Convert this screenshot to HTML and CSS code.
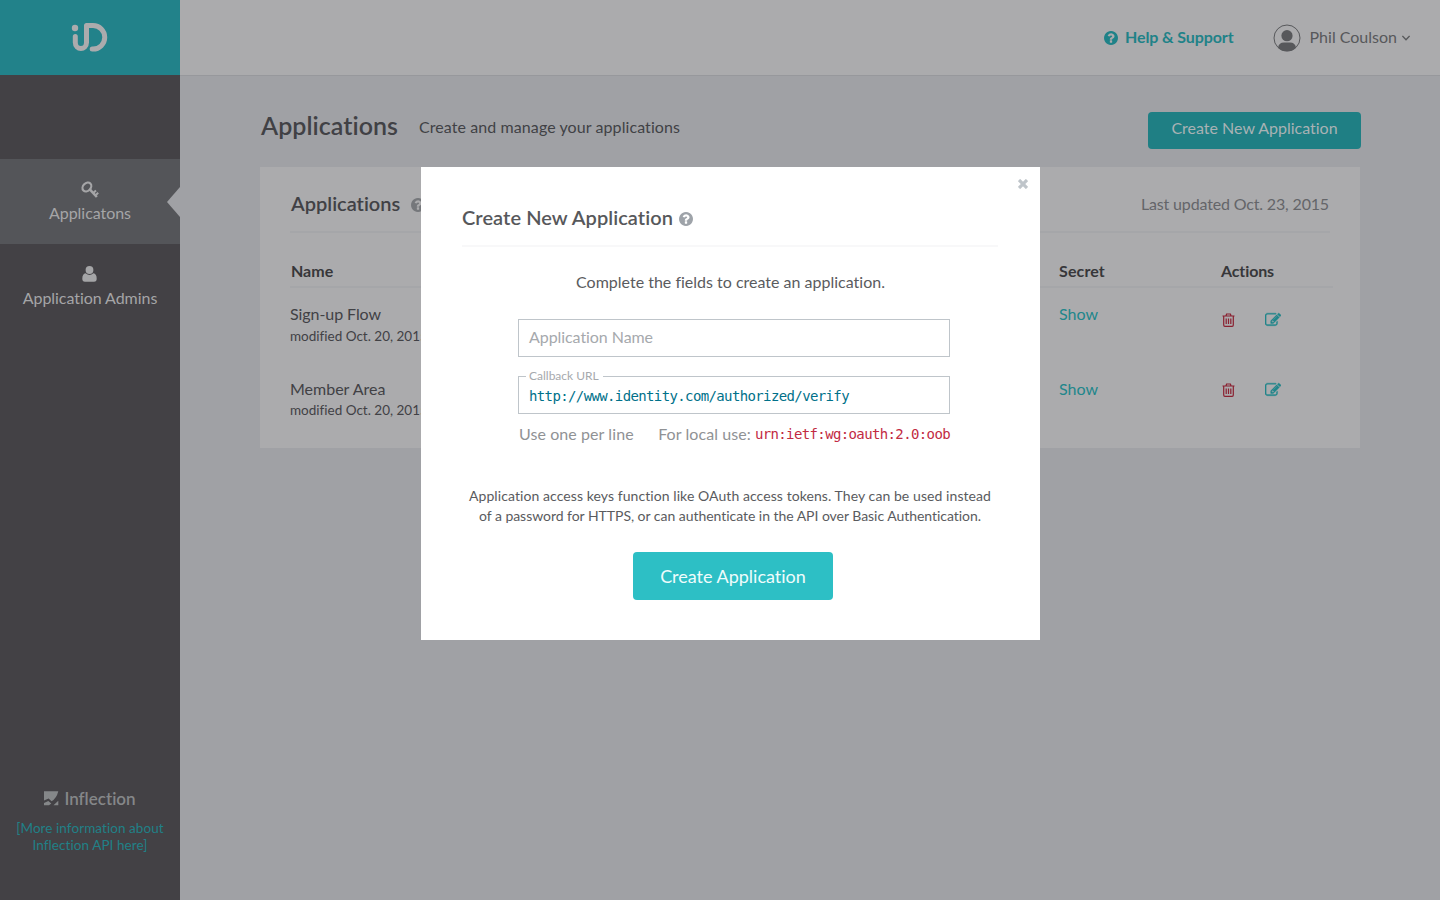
FILE: index.html
```html
<!DOCTYPE html>
<html lang="en">
<head>
<meta charset="utf-8">
<title>Applications</title>
<link rel="stylesheet" href="styles.css">
</head>
<body>
<svg class="defs" width="0" height="0">
  <symbol id="help" viewBox="128 128 1536 1536"><path d="M1024 1376v-192q0-14-9-23t-23-9h-192q-14 0-23 9t-9 23v192q0 14 9 23t23 9h192q14 0 23-9t9-23zm256-672q0-88-55.500-163t-138.500-116-170-41q-243 0-371 213-15 24 8 42l132 100q7 6 19 6 16 0 25-12 53-68 86-92 34-24 86-24 48 0 85.500 26t37.500 59q0 38-20 61t-68 45q-63 28-115.500 86.500t-52.500 125.500v36q0 14 9 23t23 9h192q14 0 23-9t9-23q0-19 21.500-49.500t54.500-49.500q32-18 49-28.500t46-35 44.500-48 28-60.500 12.500-81zm384 192q0 209-103 385.500t-279.500 279.500-385.500 103-385.500-103-279.500-279.500-103-385.500 103-385.500 279.500-279.500 385.500-103 385.500 103 279.500 279.500 103 385.500z"/></symbol>
  <symbol id="edit" viewBox="0 0 1792 1792"><path stroke="currentColor" stroke-width="40" d="M888 1184l116-116-152-152-116 116v56h96v96h56zm440-720q-16-16-33 1l-350 350q-17 17-1 33t33-1l350-350q17-17 1-33zm80 594v190q0 119-84.500 203.500t-203.500 84.500h-832q-119 0-203.500-84.500t-84.500-203.500v-832q0-119 84.500-203.500t203.500-84.500h832q63 0 117 25 15 7 18 23 3 17-9 29l-49 49q-14 14-32 8-23-6-45-6h-832q-66 0-113 47t-47 113v832q0 66 47 113t113 47h832q66 0 113-47t47-113v-126q0-13 9-22l64-64q15-15 35-7t20 29zm-96-738l288 288-672 672h-288v-288zm444 132l-92 92-288-288 92-92q28-28 68-28t68 28l152 152q28 28 28 68t-28 68z"/></symbol>
  <symbol id="trash" viewBox="0 0 13 14"><path d="M.5 3h12M4 2.800L4.600 1h3.800L9 2.800M1.700 3v9q0 1.300 1.200 1.300h7.200q1.200 0 1.200-1.300V3M4.200 5.500v5.500M6.500 5.500v5.500M8.800 5.500v5.500" fill="none" stroke="currentColor" stroke-width="1.200"/></symbol>
</svg>
<div class="app">
  <aside class="sidebar">
    <div class="brand">
      <svg width="38" height="32" viewBox="0 0 38 32" fill="none" stroke="#ababad" stroke-width="5" stroke-linecap="round" stroke-linejoin="round"><circle cx="4" cy="6" r="3.200" fill="#ababad" stroke="none"/><path d="M4.300 14.500V20.500c0 8 11.200 8 11.200 0V3.600H22a11.700 11.700 0 0 1 0 23.500H21.200"/></svg>
    </div>
    <nav class="nav">
      <a class="nav-item active">
        <svg class="key" width="18" height="18" viewBox="0 0 18 18" fill="none" stroke="currentColor"><ellipse cx="5.900" cy="6" rx="4.900" ry="3.800" transform="rotate(-45 5.900 6)" stroke-width="2.200"/><path d="M8.800 8.400l7 7.600" stroke-width="2.500"/><path d="M12.200 12l2.800-2.600M14.600 14.200l2.600-2.400" stroke-width="2"/></svg>
        <span class="t t-nav">Applicatons</span>
      </a>
      <a class="nav-item">
        <svg width="15" height="16" viewBox="0 0 15 16" fill="currentColor"><circle cx="7.500" cy="4" r="3.900"/><path d="M3.600 7.200Q.3 7.800.3 12.800.3 15.800 3 15.800h9q2.700 0 2.700-3 0-5-3.300-5.600Q7.500 10.600 3.600 7.200z"/></svg>
        <span class="t t-nav">Application Admins</span>
      </a>
    </nav>
    <div class="foot">
      <div class="company">
        <svg width="15" height="15" viewBox="0 0 15 15" fill="currentColor"><path d="M0 .3h14.300Q12.500 7.500 7.600 10.300L4.600 7.400 0 9.600z"/><path d="M0 14.300V12l4.300-2 3 2.600L5 14.300zM9.500 14.300L14.300 9.800v4.500z"/></svg>
        <span class="t">Inflection</span>
      </div>
      <div class="info"><span class="t">[More information about</span><br><span class="t">Inflection API here]</span></div>
    </div>
  </aside>
  <div class="page">
    <header class="top">
      <a class="support"><svg width="14" height="14" fill="currentColor"><use href="#help"/></svg><span class="t t-sup">Help &amp; Support</span></a>
      <a class="user">
        <svg width="28" height="28" viewBox="0 0 28 28"><clipPath id="face"><circle cx="14" cy="14" r="13.300"/></clipPath><circle cx="14" cy="14" r="13" fill="none" stroke="#57585b"/><g clip-path="url(#face)" fill="#57585b"><circle cx="14" cy="11.700" r="5.600"/><path d="M5 28V23.500q1-5 6-5h6q5 0 6 5V28z"/></g></svg>
        <span class="t">Phil Coulson</span>
        <svg class="chev" width="8" height="6" viewBox="0 0 8 6" fill="none" stroke="currentColor" stroke-width="1.300"><path d="M.4.900L4 4.700 7.600.900"/></svg>
      </a>
    </header>
    <main class="main">
      <div class="heading">
        <h1><span class="t">Applications</span></h1>
        <p><span class="t t-sub">Create and manage your applications</span></p>
        <a class="btn-new"><span class="t">Create New Application</span></a>
      </div>
      <section class="card">
        <div class="card-head">
          <h2><span class="t">Applications</span><svg width="14" height="14" fill="currentColor"><use href="#help"/></svg></h2>
          <span class="t t-upd">Last updated Oct. 23, 2015</span>
        </div>
        <div class="row cols"><span class="t">Name</span><span class="t t-sec">Secret</span><span class="t t-act">Actions</span></div>
        <div class="row item">
          <div><div class="app-name"><span class="t t-flow">Sign-up Flow</span></div><div class="mod"><span class="t">modified Oct. 20, 2015</span></div></div>
          <a class="show"><span class="t">Show</span></a>
          <div class="actions"><svg class="trash" width="13" height="14"><use href="#trash"/></svg><svg class="edit" width="16" height="16"><use href="#edit"/></svg></div>
        </div>
        <div class="row item second">
          <div><div class="app-name"><span class="t">Member Area</span></div><div class="mod"><span class="t">modified Oct. 20, 2015</span></div></div>
          <a class="show"><span class="t">Show</span></a>
          <div class="actions"><svg class="trash" width="13" height="14"><use href="#trash"/></svg><svg class="edit" width="16" height="16"><use href="#edit"/></svg></div>
        </div>
      </section>
    </main>
  </div>
</div>
<div class="modal" role="dialog">
  <svg class="close" width="10" height="10" viewBox="0 0 10 10" stroke="#bfc5ca" stroke-width="3.200"><path d="M1 1l8 8M9 1L1 9"/></svg>
  <h2 class="modal-title"><span class="t t-mt">Create New Application</span><svg width="14" height="14" fill="currentColor"><use href="#help"/></svg></h2>
  <p class="lead"><span class="t">Complete the fields to create an application.</span></p>
  <form class="form">
    <div class="field placeholder"><span class="t t-ph">Application Name</span></div>
    <div class="field url"><label><span class="t">Callback URL</span></label><code><span class="t">http://www.identity.com/authorized/verify</span></code></div>
    <div class="hint"><span class="t t-hint">Use one per line</span><span class="local"><span class="t t-hint">For local use:</span><code><span class="t">urn:ietf:wg:oauth:2.0:oob</span></code></span></div>
  </form>
  <p class="note"><span class="t t-n1">Application access keys function like OAuth access tokens. They can be used instead</span><br><span class="t t-n2">of a password for HTTPS, or can authenticate in the API over Basic Authentication.</span></p>
  <a class="btn-create"><span class="t">Create Application</span></a>
</div>
</body>
</html>
```
FILE: styles.css
```css
* { box-sizing: border-box; }
body { margin: 0; font-family: Lato, "Open Sans", sans-serif; font-size: 16px; line-height: 20px; color: #414145; background: #a0a1a5; height: 900px; overflow: hidden; position: relative; font-variant-ligatures: none; }
h1, h2, p { margin: 0; }
svg { display: block; flex: none; }
.defs { position: absolute; }
.t { white-space: nowrap; }
.t-nav { letter-spacing: -0.05px; }
.t-sup { letter-spacing: -0.1px; }
.t-sub { letter-spacing: 0.085px; }
.t-upd { letter-spacing: -0.16px; }
.t-sec { letter-spacing: 0.13px; }
.t-act { letter-spacing: -0.12px; }
.t-flow { letter-spacing: -0.07px; }
.t-mt { letter-spacing: 0.07px; }
.t-ph { letter-spacing: -0.065px; }
.t-hint { letter-spacing: 0.08px; }
.t-n1 { letter-spacing: 0.075px; }
.t-n2 { letter-spacing: -0.038px; }
.app { display: flex; height: 900px; }
.sidebar { width: 180px; background: #434145; display: flex; flex-direction: column; color: #a5a5a7; }
.brand { height: 75px; background: #22828a; display: flex; justify-content: center; padding-top: 22px; }
.nav { margin-top: 84px; }
.nav-item { height: 85px; display: flex; flex-direction: column; align-items: center; padding-top: 22px; position: relative; }
.nav-item svg { height: 16px; margin: 0 1px 6px 0; }
.nav-item .key { height: 18px; margin-bottom: 4px; }
.nav-item.active { background: #545559; }
.nav-item.active::after { content: ""; position: absolute; right: 0; top: 28px; border: solid transparent; border-width: 15px 13px 15px 0; border-right-color: #a0a1a5; }
.foot { margin-top: auto; height: 112px; }
.company { display: flex; justify-content: center; gap: 5px; color: #858789; font-size: 17px; font-weight: 600; line-height: 22px; }
.company svg { margin-top: 3px; }
.info { text-align: center; color: #218087; font-size: 13.5px; line-height: 17px; margin-top: 10px; letter-spacing: 0.07px; }
.page { flex: 1; display: flex; flex-direction: column; }
.top { height: 76px; background: #ababad; border-bottom: 1px solid #97989c; display: flex; justify-content: flex-end; align-items: center; padding-right: 30px; gap: 39px; color: #57585b; }
.top .t { padding-bottom: 2px; }
.support { display: flex; align-items: center; gap: 7px; color: #1f8288; font-weight: 700; }
.user { display: flex; align-items: center; }
.user .t { margin-left: 9px; }
.chev { margin-left: 5px; }
.main { padding: 36px 79px 0 80px; }
.heading { display: flex; height: 55px; }
h1 { font-size: 25px; line-height: 26px; font-weight: 600; margin-left: 1px; letter-spacing: 0.04px; }
.heading p { margin: 5px 0 0 21px; }
.btn-new { margin-left: auto; width: 213px; height: 37px; border-radius: 4px; background: #1f7f84; color: #a9b2b4; text-align: center; line-height: 32px; }
.card { width: 1100px; height: 281px; background: #ababad; padding: 0 27px 0 30px; }
.card-head { display: flex; justify-content: space-between; height: 66px; margin-right: 3px; border-bottom: 2px solid #a5a6a9; padding: 27px 1px 0 0; color: #646569; }
h2 { display: flex; align-items: center; font-size: 20px; font-weight: 600; line-height: 20px; height: 20px; color: #414145; }
h2 .t { padding-bottom: 2px; }
h2 svg { color: #75777b; margin: 2px 0 0 11px; }
.card h2 { margin-left: 1px; }
.row { display: grid; grid-template-columns: 769px 162px 1fr; }
.row > .t { justify-self: start; }
.cols { font-weight: 700; color: #37373a; height: 55px; padding-top: 28px; border-bottom: 2px solid #a5a6a9; }
.cols .t:first-child { margin-left: 1px; }
.item { height: 75px; padding-top: 16px; }
.mod { font-size: 13.5px; line-height: 20px; margin-top: 2px; }
.second .mod { margin-top: 1px; }
.show { color: #21868b; }
.actions { display: flex; gap: 30px; padding: 9px 0 0 1px; }
.second .actions { padding-top: 4px; }
.trash { color: #8a2030; }
.edit { color: #21868b; fill: currentColor; margin-top: -1px; }
.modal { position: absolute; left: 421px; top: 167px; width: 619px; height: 473px; background: #fff; padding: 41px 42px 0 41px; color: #5a5b5e; }
.close { position: absolute; left: 597px; top: 12px; }
.modal-title { border-bottom: 2px solid #f8f8f9; height: 39px; padding-bottom: 17px; color: #57585b; }
.modal-title svg { color: #9ea3a9; margin-left: 6px; }
.lead { text-align: center; margin-top: 25px; padding-left: 1px; }
.form { margin: 27px 48px 0 56px; }
.field { position: relative; height: 38px; border: 1px solid #bfc5ca; padding: 7px 10px; }
.placeholder { color: #a6a9ad; }
.url { margin-top: 19px; padding-top: 10px; }
.url label { position: absolute; left: 7px; top: -9px; height: 16px; line-height: 16px; padding: 0 4px 0 3px; background: #fff; font-size: 12px; color: #a6a9ad; }
code { display: block; font-family: "DejaVu Sans Mono", monospace; font-size: 14px; line-height: 19px; letter-spacing: -0.625px; color: #00718a; }
.hint { display: flex; justify-content: space-between; margin: 10px 0 0 1px; color: #909295; }
.local { display: flex; gap: 4px; }
.local code { color: #c22a42; line-height: 20px; }
.note { font-size: 14px; text-align: center; margin-top: 42px; }
.btn-create { display: block; width: 200px; height: 48px; border-radius: 4px; margin: 26px 0 0 171px; background: #2dbfc5; color: #effcfc; text-align: center; font-size: 18px; line-height: 48px; }
```
